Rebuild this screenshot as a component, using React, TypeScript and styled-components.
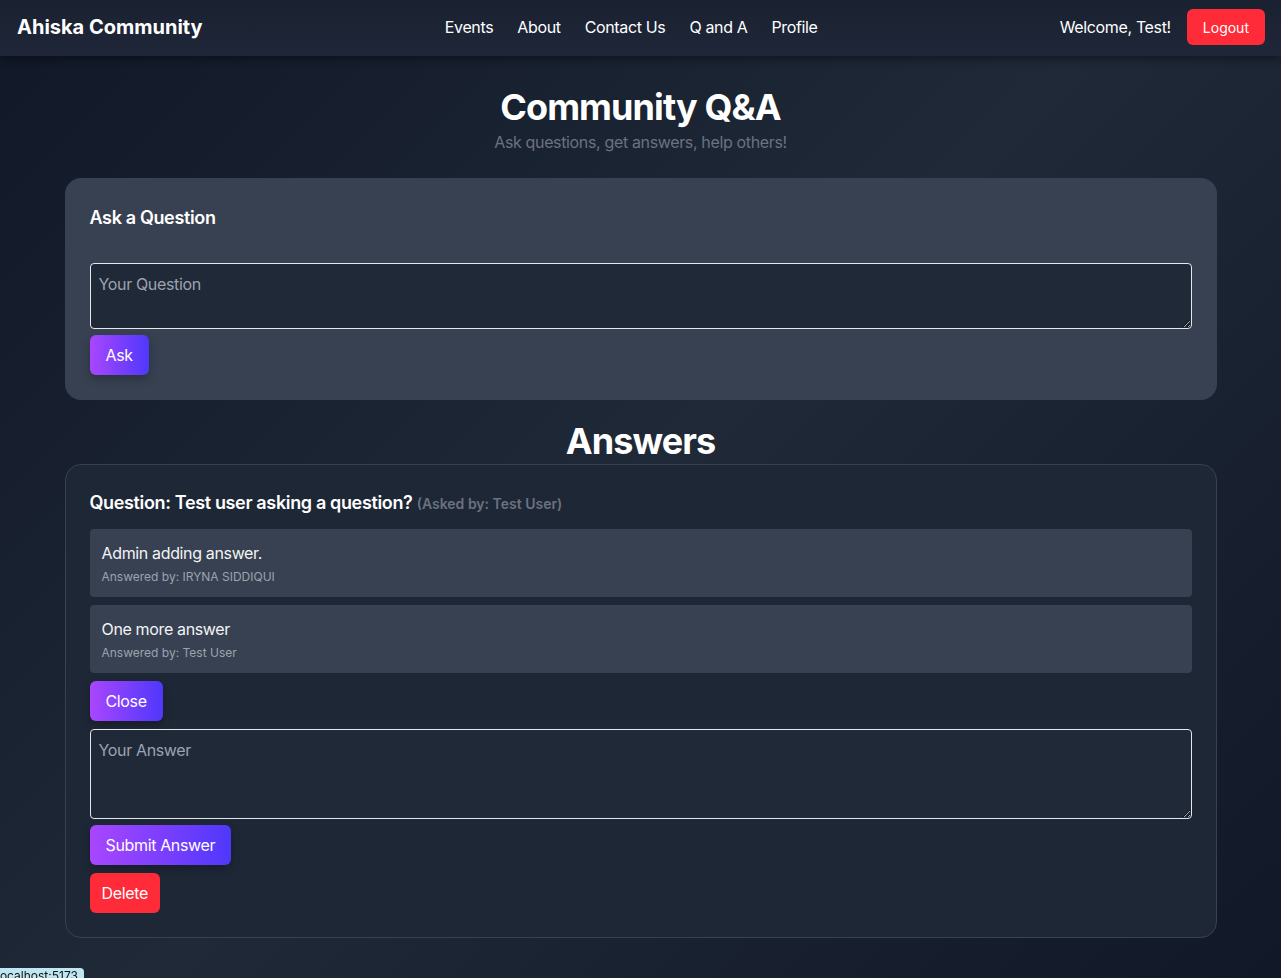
import React from "react";
import styled, { createGlobalStyle } from "styled-components";

const GlobalStyle = createGlobalStyle`
  html, body { margin: 0; padding: 0; }
  body {
    font-family: Inter, "Noto Sans", "Liberation Sans", sans-serif;
    background: #111827;
    color: #ffffff;
    letter-spacing: -0.022em;
  }
  * { box-sizing: border-box; }
`;

const Page = styled.div`
  min-height: 100vh;
  background: linear-gradient(135deg, #111827 0%, #1f2937 50%, #111827 100%);
  padding-bottom: 40px;
`;

const NavBar = styled.nav`
  height: 56px;
  display: flex;
  align-items: center;
  justify-content: space-between;
  padding: 0 16px 2px 17px;
  background: linear-gradient(180deg, #1a2131 0%, #1f2738 100%);
  box-shadow: 0 4px 8px rgba(0, 0, 0, 0.35);
`;

const Brand = styled.div`
  font-size: 20px;
  font-weight: 700;
  letter-spacing: 0;
`;

const NavLinks = styled.div`
  display: flex;
  gap: 24px;
  font-size: 16px;
`;

const NavLink = styled.a`
  color: #fff;
  text-decoration: none;
`;

const RightGroup = styled.div`
  display: flex;
  align-items: center;
  gap: 16px;
  font-size: 16px;
`;

const Button = styled.button<{ $variant?: "grad" | "red"; $size?: "sm" | "md"; $pad?: number }>`
  border: none;
  color: #fff;
  font-family: inherit;
  font-size: ${(p) => (p.$size === "sm" ? "14px" : "16px")};
  letter-spacing: ${(p) => (p.$size === "sm" ? "0" : "-0.022em")};
  height: ${(p) => (p.$size === "sm" ? "36px" : "40px")};
  padding: 0 ${(p) => p.$pad ?? 16}px;
  border-radius: 6px;
  cursor: pointer;
  align-self: flex-start;
  background: ${(p) =>
    p.$variant === "red"
      ? "#ff2b38"
      : "linear-gradient(90deg, #a946ff 0%, #4f38fb 100%)"};
  box-shadow: ${(p) =>
    p.$variant === "red" ? "none" : "0 4px 8px rgba(0,0,0,0.25)"};
`;

const Main = styled.main`
  max-width: 1152px;
  margin: 0 auto;
  display: flex;
  flex-direction: column;
`;

const Title = styled.h1`
  margin: 31px 0 0;
  font-size: 36px;
  line-height: 40px;
  font-weight: 700;
  letter-spacing: -0.025em;
  text-align: center;
`;

const Subtitle = styled.p`
  margin: 3px 0 24px;
  font-size: 16px;
  line-height: 24px;
  color: #6b7280;
  text-align: center;
`;

const Card = styled.section<{ $outlined?: boolean }>`
  border-radius: 16px;
  padding: 25px 24px 24px;
  display: flex;
  flex-direction: column;
  background: ${(p) => (p.$outlined ? "#1e2736" : "#374151")};
  border: 1px solid ${(p) => (p.$outlined ? "#374151" : "transparent")};
`;

const CardTitle = styled.h3`
  margin: 0 0 31px;
  font-size: 18px;
  line-height: 28px;
  font-weight: 600;
`;

const TextArea = styled.textarea<{ $h: number }>`
  display: block;
  width: 100%;
  height: ${(p) => p.$h}px;
  background: #1f2937;
  border: 1px solid #e5e7eb;
  border-radius: 4px;
  color: #fff;
  font-family: inherit;
  font-size: 16px;
  line-height: 24px;
  letter-spacing: -0.022em;
  padding: 8px;
  resize: vertical;
  margin-bottom: 6px;
  &::placeholder { color: #9ca3af; }
`;

const SectionHeading = styled.h2`
  margin: 21px 0 3px;
  font-size: 36px;
  line-height: 40px;
  font-weight: 700;
  letter-spacing: -0.025em;
  text-align: center;
`;

const Question = styled.h3`
  margin: -1px 0 11px;
  font-size: 18px;
  line-height: 28px;
  font-weight: 600;
`;

const AskedBy = styled.span`
  font-size: 14px;
  color: #6b7280;
  font-weight: 600;
  letter-spacing: 0;
`;

const AnswerList = styled.div`
  display: flex;
  flex-direction: column;
  gap: 8px;
  margin-bottom: 8px;
`;

const AnswerBox = styled.div`
  background: #374151;
  border-radius: 4px;
  padding: 12px 12px 10px;
  display: flex;
  flex-direction: column;
`;

const AnswerText = styled.p`
  margin: 0;
  font-size: 16px;
  line-height: 24px;
  color: #f3f4f6;
`;

const AnswerMeta = styled.p`
  margin: 2px 0 0;
  font-size: 12px;
  line-height: 20px;
  color: #9ca3af;
  letter-spacing: 0;
`;

const Stack = styled.div`
  display: flex;
  flex-direction: column;
  gap: 8px;
`;

const StatusBar = styled.div`
  position: fixed;
  left: 0;
  bottom: -6px;
  background: #bfe6f3;
  color: #111;
  font-size: 12px;
  line-height: 16px;
  letter-spacing: 0;
  padding: 0 6px 0 0;
  border-top-right-radius: 4px;
  text-indent: -3px;
  overflow: hidden;
`;

export default function App() {
  return (
    <>
      <GlobalStyle />
      <Page>
        <NavBar>
          <Brand>Ahiska Community</Brand>
          <NavLinks>
            <NavLink href="#">Events</NavLink>
            <NavLink href="#">About</NavLink>
            <NavLink href="#">Contact Us</NavLink>
            <NavLink href="#">Q and A</NavLink>
            <NavLink href="#">Profile</NavLink>
          </NavLinks>
          <RightGroup>
            <span>Welcome, Test!</span>
            <Button $variant="red" $size="sm">Logout</Button>
          </RightGroup>
        </NavBar>
        <Main>
          <Title>Community Q&amp;A</Title>
          <Subtitle>Ask questions, get answers, help others!</Subtitle>
          <Card>
            <CardTitle>Ask a Question</CardTitle>
            <TextArea $h={66} placeholder="Your Question" />
            <Button>Ask</Button>
          </Card>
          <SectionHeading>Answers</SectionHeading>
          <Card $outlined>
            <Question>
              Question: Test user asking a question? <AskedBy>(Asked by: Test User)</AskedBy>
            </Question>
            <AnswerList>
              <AnswerBox>
                <AnswerText>Admin adding answer.</AnswerText>
                <AnswerMeta>Answered by: IRYNA SIDDIQUI</AnswerMeta>
              </AnswerBox>
              <AnswerBox>
                <AnswerText>One more answer</AnswerText>
                <AnswerMeta>Answered by: Test User</AnswerMeta>
              </AnswerBox>
            </AnswerList>
            <Stack>
              <Button>Close</Button>
              <div>
                <TextArea $h={90} placeholder="Your Answer" />
                <Stack>
                  <Button>Submit Answer</Button>
                  <Button $variant="red" $pad={12}>Delete</Button>
                </Stack>
              </div>
            </Stack>
          </Card>
        </Main>
        <StatusBar>localhost:5173</StatusBar>
      </Page>
    </>
  );
}
